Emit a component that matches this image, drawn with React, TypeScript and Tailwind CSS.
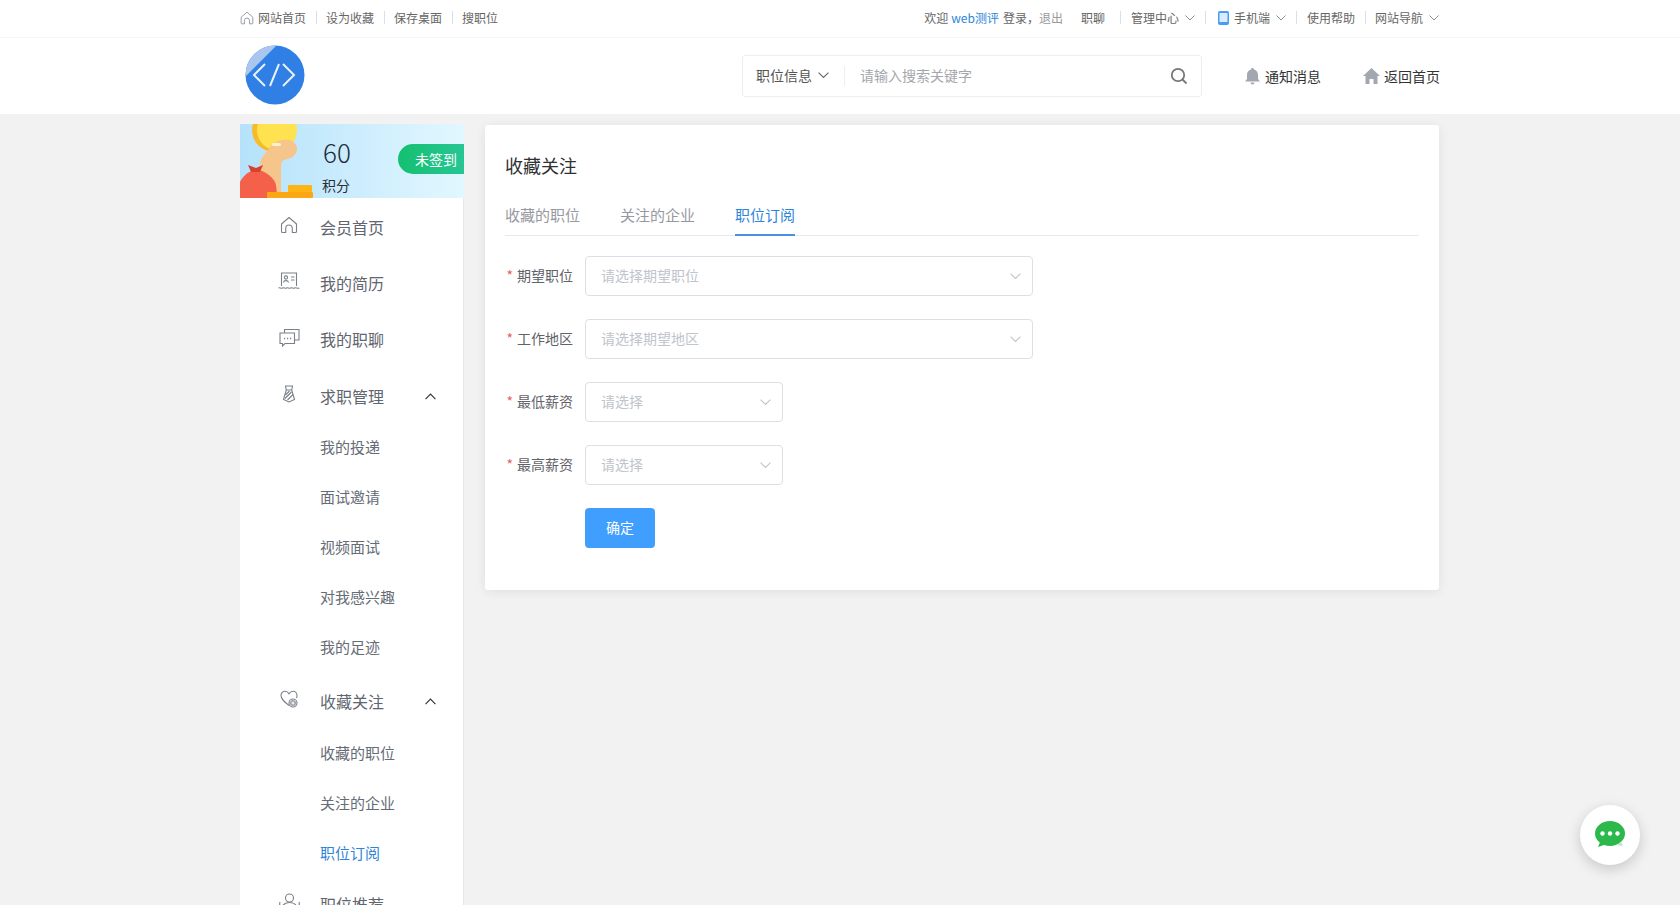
import React from "react";

const Chev = ({ className = "", up = false, color = "#8a8f99", w = 10 }: { className?: string; up?: boolean; color?: string; w?: number }) => (
  <svg width={w} height={w * 0.6} viewBox="0 0 10 6" className={className} fill="none" stroke={color} strokeWidth="1">
    <path d={up ? "M0.5 5.5L5 1l4.5 4.5" : "M0.5 0.5L5 5l4.5-4.5"} />
  </svg>
);

const Sep = () => <span className="w-px h-[13px] bg-[#dcdfe6]" />;

const HomeOutline = ({ s = 18, c = "#7b808a" }: { s?: number; c?: string }) => (
  <svg width={s} height={s} viewBox="0 0 18 18" fill="none" stroke={c} strokeWidth="1.1" strokeLinejoin="round">
    <path d="M1.5 8L9 1.5 16.5 8v7.5a1 1 0 0 1-1 1h-3.2v-4.2a3.3 3.3 0 0 0-6.6 0v4.2H2.5a1 1 0 0 1-1-1z" />
  </svg>
);

const icons: Record<string, React.ReactNode> = {
  home: <HomeOutline />,
  resume: (
    <svg width="22" height="18" viewBox="0 0 22 18" fill="none" stroke="#7b808a" strokeWidth="1.1">
      <path d="M3.5 14V1h15v13" />
      <circle cx="8" cy="5.500" r="1.600" />
      <path d="M5.500 10.500c.3-2.500 4.700-2.500 5 0M13 5h3.500M13 8h3.500" />
      <path d="M0.500 16c1.500-1 2.500 1 4 0s2.500 1 4 0 2.500 1 4 0 2.500 1 4 0 2.500 1 5 0" />
    </svg>
  ),
  chat: (
    <svg width="21" height="19" viewBox="0 0 21 19" fill="none" stroke="#7b808a" strokeWidth="1.1">
      <path d="M1 5h14.500v10.500H6l-2.500 2.500v-2.500H1z" />
      <path d="M5.500 5V1.500H20v10.500h-4.500" />
      <path d="M5 10.500h1.200M8 10.500h1.200M11 10.500h1.200" strokeWidth="1.400" />
    </svg>
  ),
  tie: (
    <svg width="14" height="18" viewBox="0 0 14 18" fill="none" stroke="#7b808a" strokeWidth="1.1">
      <path d="M3.500 1h7l-.8 4H4.300zM4.300 5L1.500 14.500 7 17l5.500-2.500L9.700 5z" />
      <path d="M3.500 10l4-4M3 13.500l6.500-6.500M5.500 15l5.500-5.500" />
    </svg>
  ),
  heart: (
    <svg width="18" height="18" viewBox="0 0 18 18" fill="none" stroke="#7b808a" strokeWidth="1.1">
      <path d="M9 15.500C4 11.500 1 9 1 5.500 1 3 3 1.300 5 1.300c1.600 0 3 .9 4 2.400 1-1.500 2.400-2.400 4-2.400 2 0 4 1.700 4 4.200 0 .9-.2 1.700-.6 2.500" />
      <circle cx="13" cy="13" r="4" fill="#fff" />
      <circle cx="13" cy="13" r="3" fill="#9ca0a8" stroke="none" />
      <path d="M11.500 13h3M13 11.500v3" stroke="#fff" />
    </svg>
  ),
  user: (
    <svg width="21" height="19" viewBox="0 0 21 19" fill="none" stroke="#7b808a" strokeWidth="1.1">
      <circle cx="10.500" cy="5" r="4" />
      <path d="M3 16c0-4 3-6.500 7.500-6.500S18 12 18 16M1 9c-.6 2 0 4 1 5M20 9c.6 2 0 4-1 5" />
    </svg>
  ),
};

const MainItem = ({ icon, label, open }: { icon: string; label: string; open?: boolean }) => (
  <div className="relative h-[50px] flex items-center pl-[37px]">
    <span className="w-[24px] flex justify-center -translate-y-[2px]">{icons[icon]}</span>
    <span className="ml-[19px] text-[16px] text-[#5f6670]">{label}</span>
    {open && <Chev up color="#303133" w={11} className="absolute right-[27px] top-[22px]" />}
  </div>
);

const SubItem = ({ label, active }: { label: string; active?: boolean }) => (
  <div className={`h-[50px] flex items-center pl-[80px] text-[15px] ${active ? "text-[#2f86d8]" : "text-[#666c76]"}`}>{label}</div>
);

const Banner = () => (
  <div className="relative h-[74px] w-[224px] bg-gradient-to-r from-[#b5e2fb] to-[#e2f7ff] overflow-hidden">
    <svg width="80" height="74" viewBox="0 0 80 74" className="absolute left-0 top-0">
      <circle cx="34" cy="6" r="22" fill="#f6bb2a" />
      <circle cx="37" cy="6" r="20" fill="#ffe24f" />
      <path d="M18 74L20 42c0-4 1-8 4-11 3-4 6-9 10-12 4-3 10-4 15-3 5 1 8 5 8 9 0 5-4 9-10 10-4 1-6 3-6 6v33z" fill="#f5c58b" />
      <rect x="32" y="19" width="9" height="3" rx="1.500" fill="#fff3c9" />
      <path d="M0 58c4-8 11-12 17-12s14 5 18 12c2 5 2 16 2 16H0z" fill="#f5604a" />
      <path d="M8 41l8 3 7-3-3 7h-9z" fill="#d8402f" />
      <rect x="48" y="61" width="24" height="7" rx="1" fill="#fdb414" />
      <rect x="27" y="68" width="46" height="6" rx="1" fill="#fca816" />
    </svg>
    <div className="absolute left-[83px] top-[13px] text-[26px] leading-[30px] font-light text-[#222b3a]">60</div>
    <div className="absolute left-[82px] top-[51px] text-[14px] leading-[20px] text-[#2a2f36]">积分</div>
    <div className="absolute right-0 top-[20px] w-[66px] h-[30px] rounded-l-[15px] bg-gradient-to-r from-[#14c06f] to-[#26c694] text-white text-[14px] leading-[30px] pl-[17px]">未签到</div>
  </div>
);

const Field = ({ label, placeholder, narrow }: { label: string; placeholder: string; narrow?: boolean }) => (
  <div className="flex items-center h-[40px] mb-[23px]">
    <label className="w-[68px] shrink-0 text-right text-[14px] text-[#5f6268] whitespace-nowrap -translate-y-[1px]">
      <span className="text-[#e2635f] mr-[4px]">*</span>{label}
    </label>
    <div className={`ml-[12px] h-[40px] border border-[#dcdfe6] rounded-[4px] bg-white flex items-center justify-between pl-[15px] pr-[11px] ${narrow ? "w-[198px]" : "w-[448px]"}`}>
      <span className="text-[14px] text-[#c0c4cc] -translate-y-[1px]">{placeholder}</span>
      <Chev color="#c0c4cc" w={11} />
    </div>
  </div>
);

export default function App() {
  return (
    <div className="h-[905px] overflow-hidden bg-[#f2f2f2] relative font-['Noto_Sans_CJK_SC','Liberation_Sans',sans-serif]">
      {/* top bar */}
      <div className="h-[38px] bg-white border-b border-[#f5f5f5]">
        <div className="w-[1200px] mx-auto h-full flex items-center justify-between text-[12px] text-[#666] -translate-y-[1px]">
          <div className="flex items-center">
            <HomeOutline s={14} c="#8a8f99" />
            <span className="ml-[4px]">网站首页</span>
            <span className="ml-[10px] mr-[9px] flex"><Sep /></span>
            <span>设为收藏</span>
            <span className="ml-[10px] mr-[9px] flex"><Sep /></span>
            <span>保存桌面</span>
            <span className="ml-[10px] mr-[9px] flex"><Sep /></span>
            <span>搜职位</span>
          </div>
          <div className="flex items-center mr-[1px]">
            <span>欢迎</span>
            <span className="ml-[3px] text-[#2f86d8]">web测评</span>
            <span className="ml-[4px]">登录，</span>
            <span className="text-[#999]">退出</span>
            <span className="ml-[18px]">职聊</span>
            <span className="mr-[10px] ml-[15px] flex"><Sep /></span>
            <span>管理中心</span>
            <Chev className="ml-[6px]" />
            <span className="ml-[10px] mr-[12px] flex"><Sep /></span>
            <svg width="11" height="14" viewBox="0 0 11 14">
              <rect width="11" height="14" rx="2" fill="#4b9bf0" />
              <rect x="1.500" y="2" width="8" height="9" fill="#d8ebff" />
            </svg>
            <span className="ml-[5px]">手机端</span>
            <Chev className="ml-[6px]" />
            <span className="mx-[10px] flex"><Sep /></span>
            <span>使用帮助</span>
            <span className="ml-[10px] mr-[9px] flex"><Sep /></span>
            <span>网站导航</span>
            <Chev className="ml-[6px]" />
          </div>
        </div>
      </div>
      {/* header */}
      <div className="h-[76px] bg-white">
        <div className="w-[1200px] mx-auto h-full flex items-center">
          <svg width="60" height="60" viewBox="0 0 60 60" className="ml-[5px] mb-[2px] shrink-0">
            <defs>
              <clipPath id="logo-clip"><circle cx="30" cy="30" r="29.500" /></clipPath>
            </defs>
            <circle cx="30" cy="30" r="29.500" fill="#2f7fe5" />
            <path d="M-5 23L23-5h14L-5 37z" fill="#a9c6ee" clipPath="url(#logo-clip)" />
            <g fill="none" stroke="#e8f1fc" strokeWidth="2">
              <path d="M20 19L9 30l11 11M38 19l11 11-11 11M34 19l-9 22" />
            </g>
          </svg>
          <div className="ml-[437px] w-[460px] shrink-0 h-[42px] mb-[1px] border border-[#eeeeee] rounded-[3px] flex items-center">
            <span className="ml-[13px] text-[14px] text-[#555]">职位信息</span>
            <Chev className="ml-[6px]" color="#666" w={11} />
            <span className="ml-[15px] w-px h-[20px] bg-[#eeeeee]" />
            <span className="ml-[15px] text-[14px] text-[#a4a7ad] flex-1">请输入搜索关键字</span>
            <svg width="18" height="18" viewBox="0 0 18 18" fill="none" stroke="#777" strokeWidth="1.800" className="mr-[13px]">
              <circle cx="8" cy="8" r="6.200" />
              <path d="M12.500 12.500L16.500 16.500" />
            </svg>
          </div>
          <svg width="15" height="17" viewBox="0 0 15 17" fill="#a3a7b0" className="ml-[43px] shrink-0">
            <path d="M7.500 0C8.300 0 9 .6 9 1.400 11.500 2 13 4 13 6.800V11l2 2.500H0L2 11V6.800C2 4 3.500 2 6 1.400 6 .6 6.700 0 7.500 0zM5.500 14.500h4a2 2 0 0 1-4 0z" />
          </svg>
          <span className="ml-[5px] text-[14px] text-[#333] whitespace-nowrap shrink-0">通知消息</span>
          <svg width="17" height="16" viewBox="0 0 17 16" fill="#a3a7b0" className="ml-[42px] shrink-0">
            <path d="M8.500 0L17 8h-2.500v8H10.500v-5h-4v5H2.500V8H0z" />
          </svg>
          <span className="ml-[4px] text-[14px] text-[#333] whitespace-nowrap shrink-0">返回首页</span>
        </div>
      </div>
      {/* main */}
      <div className="w-[1200px] mx-auto pt-[10px] flex items-start">
        <aside className="w-[224px] shrink-0">
          <Banner />
          <div className="w-[224px] bg-white border-r border-[#e8e8e8] pt-[4px] h-[800px]">
            <div className="mb-[6px]"><MainItem icon="home" label="会员首页" /></div>
            <div className="mb-[6px]"><MainItem icon="resume" label="我的简历" /></div>
            <div className="mb-[7px]"><MainItem icon="chat" label="我的职聊" /></div>
            <MainItem icon="tie" label="求职管理" open />
            <div className="mt-[1px] mb-[4px]">
              <SubItem label="我的投递" />
              <SubItem label="面试邀请" />
              <SubItem label="视频面试" />
              <SubItem label="对我感兴趣" />
              <SubItem label="我的足迹" />
            </div>
            <MainItem icon="heart" label="收藏关注" open />
            <div className="mt-[2px] mb-[1px]">
              <SubItem label="收藏的职位" />
              <SubItem label="关注的企业" />
              <SubItem label="职位订阅" active />
            </div>
            <MainItem icon="user" label="职位推荐" />
          </div>
        </aside>
        <main className="ml-[21px] mt-[1px] w-[954px] h-[465px] bg-white rounded-[3px] shadow-[0_2px_12px_rgba(0,0,0,0.08)] px-[20px]">
          <h1 className="mt-[26px] text-[18px] leading-[28px] font-normal text-[#303133]">收藏关注</h1>
          <div className="mt-[18px] flex gap-[40px] border-b border-[#e8e9ec] h-[39px]">
            <span className="text-[15px] leading-[36px] text-[#96999f]">收藏的职位</span>
            <span className="text-[15px] leading-[36px] text-[#96999f]">关注的企业</span>
            <span className="h-[39px] text-[15px] leading-[36px] text-[#2f86d8] border-b-2 border-[#4a90e2]">职位订阅</span>
          </div>
          <div className="mt-[20px]">
            <Field label="期望职位" placeholder="请选择期望职位" />
            <Field label="工作地区" placeholder="请选择期望地区" />
            <Field label="最低薪资" placeholder="请选择" narrow />
            <Field label="最高薪资" placeholder="请选择" narrow />
            <button className="ml-[80px] block w-[70px] h-[40px] pb-[2px] bg-[#409eff] rounded-[4px] text-white text-[14px]">确定</button>
          </div>
        </main>
      </div>
      {/* floating chat */}
      <div className="absolute left-[1580px] top-[805px] w-[60px] h-[60px] rounded-full bg-white shadow-[0_4px_14px_rgba(0,0,0,0.18)] flex items-center justify-center">
        <svg width="30" height="28" viewBox="0 0 30 28">
          <ellipse cx="15" cy="12.500" rx="15" ry="12.500" fill="#2cb84b" />
          <path d="M3 26l3-7 6 4z" fill="#2cb84b" />
          <path d="M22 24c3 1 5 1 6 .5l-2-4z" fill="#bfe8c8" />
          <circle cx="7.500" cy="12.500" r="2.200" fill="#fff" />
          <circle cx="15" cy="12.500" r="2.200" fill="#fff" />
          <circle cx="22.500" cy="12.500" r="2.200" fill="#fff" />
        </svg>
      </div>
    </div>
  );
}
